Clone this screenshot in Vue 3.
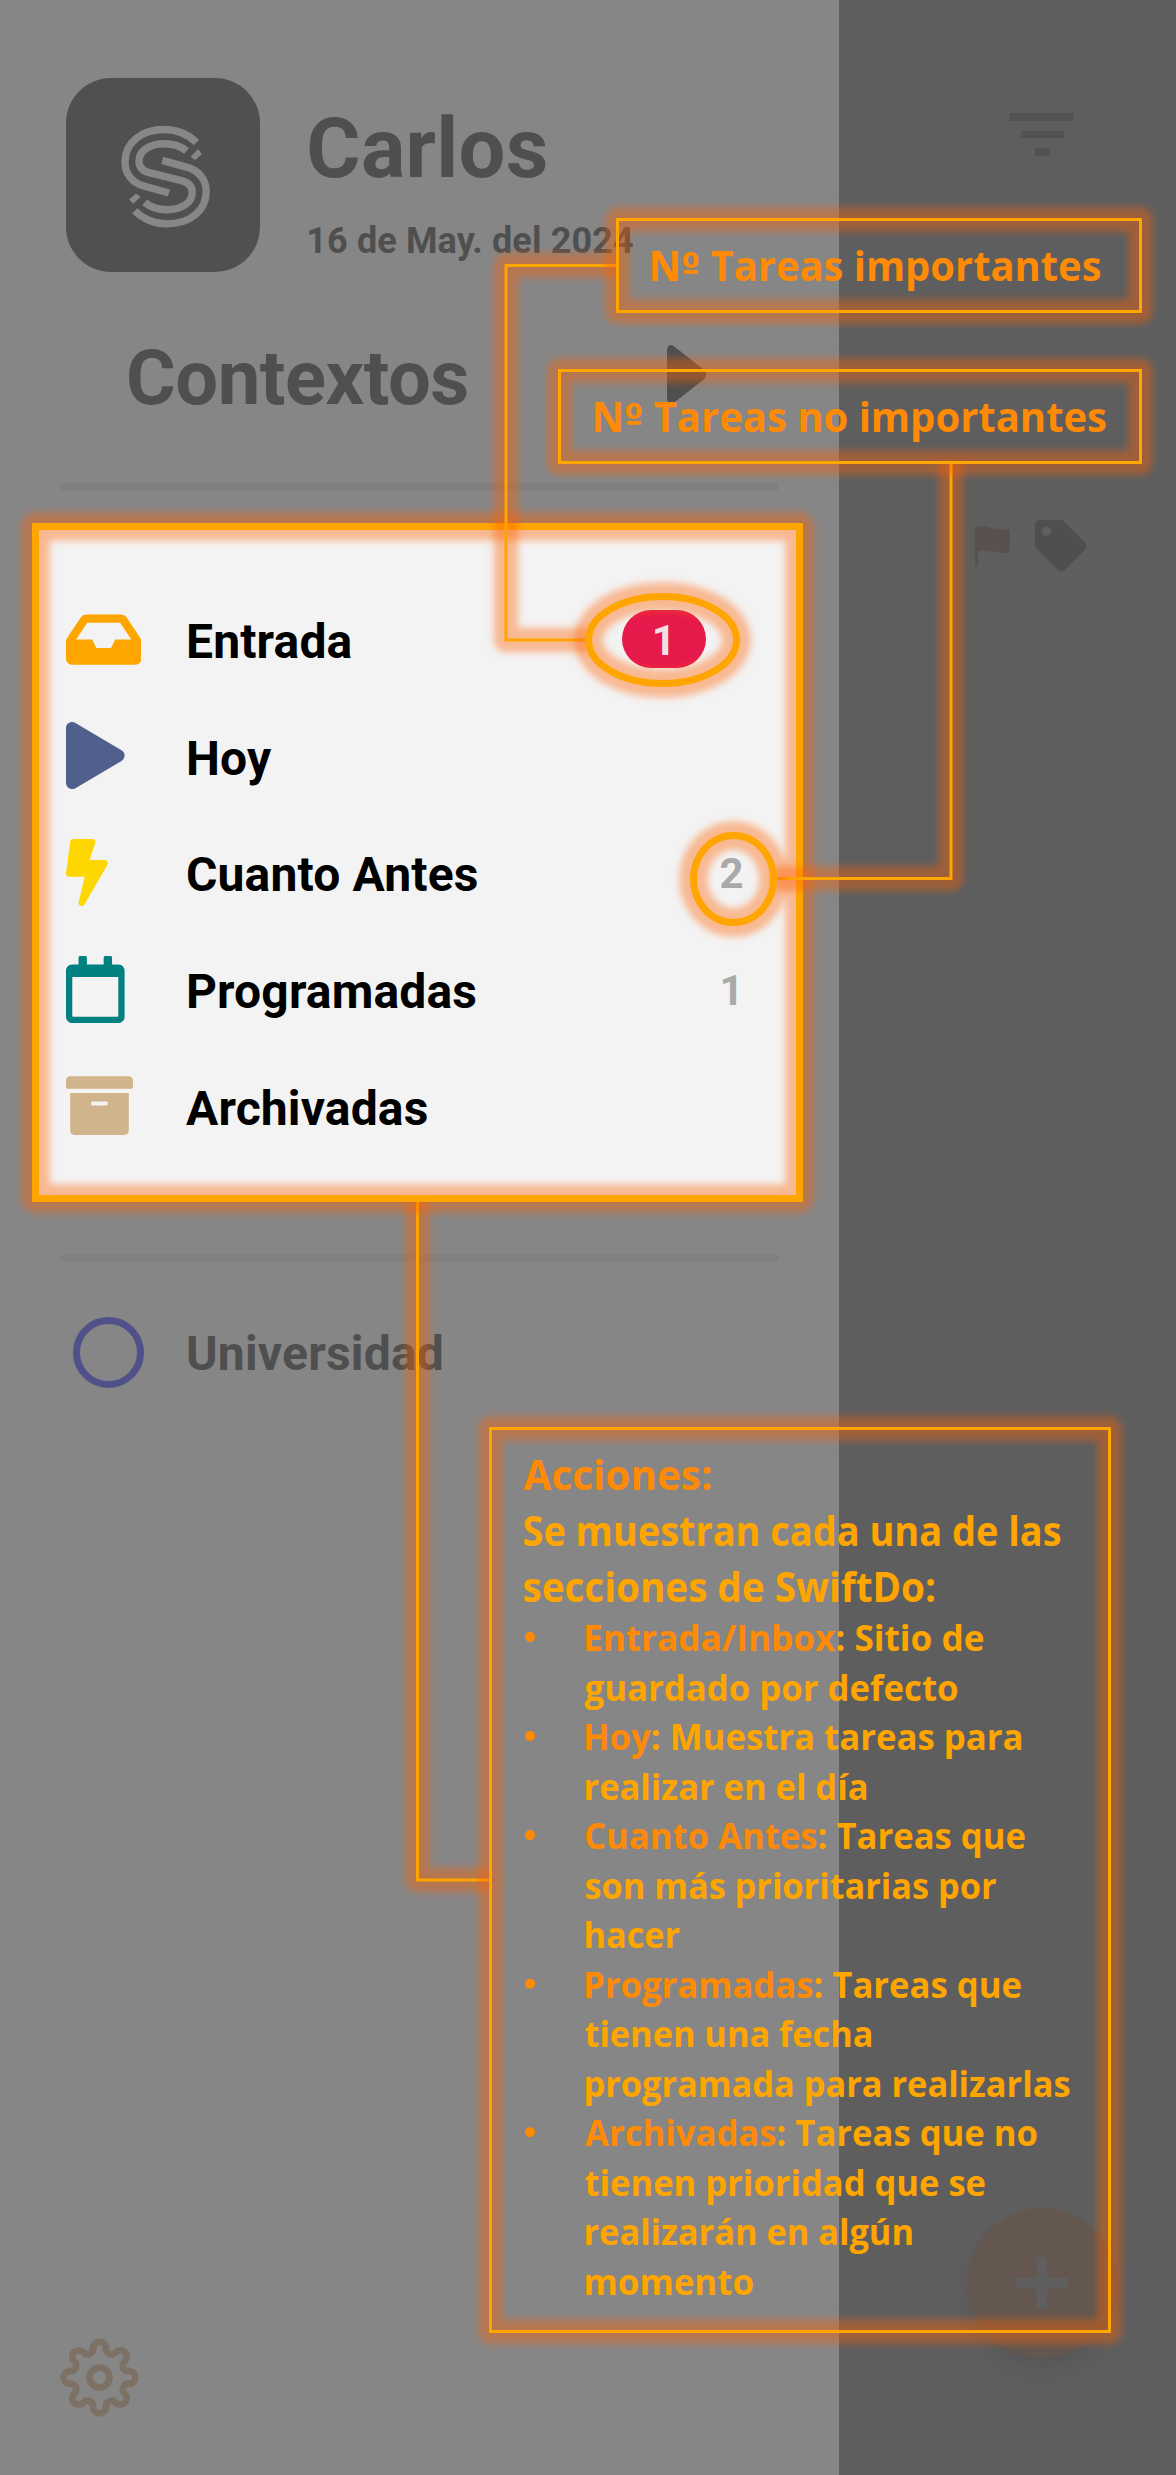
<script setup>
const sections = [
  {
    name: 'Entrada', color: '#ffa500', w: 75.4, box: '0 0 576 512', count: '1', important: true,
    path: 'M567.938 243.908L462.25 85.374A48.003 48.003 0 0 0 422.311 64H153.689a48 48 0 0 0-39.938 21.374L8.062 243.908A47.994 47.994 0 0 0 0 270.533V400c0 26.51 21.49 48 48 48h480c26.51 0 48-21.49 48-48V270.533a47.994 47.994 0 0 0-8.062-26.625zM162.252 128h251.497l85.333 128H376l-32 64H232l-32-64H76.918l85.334-128z',
  },
  {
    name: 'Hoy', color: '#505f8c', w: 58.6, box: '0 0 448 512',
    path: 'M424.4 214.7L72.4 6.6C43.8-10.3 0 6.1 0 47.9V464c0 37.5 40.7 60.1 72.4 41.3l352-208c31.4-18.5 31.5-64.1 0-82.6z',
  },
  {
    name: 'Cuanto Antes', color: '#ffd700', w: 41.9, box: '0 0 320 512', count: '2',
    path: 'M296 160H180.6l42.6-129.8C227.2 15 215.7 0 200 0H56C44 0 33.8 8.9 32.2 20.8l-32 240C-1.7 275.2 9.5 288 24 288h118.7L96.6 482.5c-3.6 15.2 8 29.5 23.3 29.5 8.4 0 16.4-4.4 20.8-12l176-304c9.3-15.9-2.2-36-20.7-36z',
  },
  {
    name: 'Programadas', color: '#008080', w: 58.6, box: '0 0 448 512', count: '1',
    path: 'M400 64h-48V12c0-6.6-5.4-12-12-12h-40c-6.6 0-12 5.4-12 12v52H160V12c0-6.6-5.4-12-12-12h-40c-6.6 0-12 5.4-12 12v52H48C21.5 64 0 85.5 0 112v352c0 26.5 21.5 48 48 48h352c26.5 0 48-21.5 48-48V112c0-26.5-21.5-48-48-48zm-6 400H54c-3.3 0-6-2.7-6-6V160h352v298c0 3.3-2.7 6-6 6z',
  },
  {
    name: 'Archivadas', color: '#d2b48c', w: 67, box: '0 0 512 512',
    path: 'M32 448c0 17.7 14.3 32 32 32h384c17.7 0 32-14.3 32-32V160H32v288zm160-212c0-6.6 5.4-12 12-12h104c6.6 0 12 5.4 12 12v8c0 6.6-5.4 12-12 12H204c-6.6 0-12-5.4-12-12v-8zM480 32H32C14.3 32 0 46.3 0 64v48c0 8.8 7.2 16 16 16h480c8.8 0 16-7.2 16-16V64c0-17.7-14.3-32-32-32z',
  },
]

// Eight-lobed gear outline: lobe circles alternate with valley circles tangent to them.
function gearPath() {
  const lobe = { r: 6.3, d: 29.5 }
  const valley = { r: 5.5, d: 31 }
  const at = (d, deg) => {
    const a = ((deg - 90) * Math.PI) / 180
    return [39 + d * Math.cos(a), 39 + d * Math.sin(a)]
  }
  const tangent = (l, v) => {
    const t = lobe.r / (lobe.r + valley.r)
    return [l[0] + (v[0] - l[0]) * t, l[1] + (v[1] - l[1]) * t].map((n) => n.toFixed(2)).join(' ')
  }
  let d = ''
  for (let k = 0; k < 8; k++) {
    const l = at(lobe.d, k * 45)
    const before = tangent(l, at(valley.d, k * 45 - 22.5))
    const after = tangent(l, at(valley.d, k * 45 + 22.5))
    d += k === 0 ? `M${before}` : `A${valley.r} ${valley.r} 0 0 0 ${before}`
    d += `A${lobe.r} ${lobe.r} 0 0 1 ${after}`
  }
  return d + `A${valley.r} ${valley.r} 0 0 0 ${tangent(at(lobe.d, 0), at(valley.d, -22.5))}Z`
}
const gear = gearPath()

// Callout labels: [text after "Nº", left, right, baseline]
const labels = [
  [' Tareas importantes', 648.5, 1101.5, 281],
  [' Tareas no importantes', 591.5, 1107, 432],
]
// Callout lines: [key text, remaining text, left, right, baseline]
const headings = [
  ['Acciones:', '', 523.5, 712.5, 1490],
  ['', 'Se muestran cada una de las', 522.5, 1061.5, 1546],
  ['', 'secciones de SwiftDo:', 522.5, 936, 1601.5],
]
const items = [
  ['Entrada/Inbox', ': Sitio de', 583, 984.5, true],
  ['', 'guardado por defecto', 584.5, 958.5],
  ['Hoy', ': Muestra tareas para', 583, 1023.5, true],
  ['', 'realizar en el día', 583.5, 868.5],
  ['Cuanto Antes', ': Tareas que', 584, 1026, true],
  ['', 'son más prioritarias por', 584.5, 996.5],
  ['', 'hacer', 583.5, 680],
  ['Programadas', ': Tareas que', 583, 1022, true],
  ['', 'tienen una fecha', 584.5, 873.5],
  ['', 'programada para realizarlas', 583.5, 1070.5],
  ['Archivadas', ': Tareas que no', 585, 1038, true],
  ['', 'tienen prioridad que se', 584.5, 986],
  ['', 'realizarán en algún', 583.5, 914],
  ['', 'momento', 583.5, 754],
].map((l, i) => [...l.slice(0, 4), 1651 + i * 49.53, l[4]])
</script>

<template>
  <div class="screen">
    <aside class="drawer">
      <header class="profile">
        <div class="logo">
          <svg viewBox="0 0 194 194" width="194" height="194">
            <g v-for="a in [0, 180]" :key="a" :transform="`rotate(${a} 99.6 98.7)`">
              <path class="band" d="M130.5 64.5C121 55.5 110 51.5 98.5 51.5C75 51.5 59 65 59 84C59 95.5 66 104.5 77 107.8L103 115" />
              <path class="band" d="M120.5 73C114 67.5 106 65.7 98.5 65.7C83 65.7 73 73 73 83C73 89.5 77 93 83 94.6L99.6 98.7" />
              <path class="chip" d="M124.6 78.7L132 71.3L136 76L129.3 82Z" />
            </g>
          </svg>
        </div>
        <div class="who">
          <h1>Carlos</h1>
          <p>16 de May. del 2024</p>
        </div>
      </header>

      <div class="contexts">
        <h2>Contextos</h2>
        <svg viewBox="0 0 448 512" width="39" height="59" preserveAspectRatio="none"><path fill="#4f4f4f" :d="sections[1].path" /></svg>
      </div>
      <div class="rule"></div>

      <nav class="sections">
        <div v-for="s in sections" :key="s.name" class="row">
          <svg :viewBox="s.box" :width="s.w" height="67.2"><path :fill="s.color" :d="s.path" /></svg>
          <span class="name">{{ s.name }}</span>
          <span v-if="s.count" class="count" :class="{ badge: s.important }">{{ s.count }}</span>
        </div>
      </nav>

      <div class="rule second"></div>
      <div class="context">
        <span class="ring"></span>
        <span class="title">Universidad</span>
      </div>

      <svg class="settings" viewBox="0 0 78 78" width="79" height="79">
        <g fill="none" stroke="#7c7164" stroke-width="6.6">
          <path :d="gear" />
          <circle cx="39" cy="39" r="9.8" />
        </g>
      </svg>
    </aside>

    <main class="tasks">
      <div class="filter"><i></i><i></i><i></i></div>
      <div class="marks">
        <svg viewBox="0 0 35 40" width="35" height="40">
          <path fill="#5b5050" d="M0 2.4Q0 1 1.6 .8C13-2 20 6 32.5 3Q35 2.4 35 4.8V24Q35 25.6 33.4 26.2C22 29.5 14 22 3 25V39Q3 40 2 40H1Q0 40 0 39Z" />
        </svg>
        <svg viewBox="0 0 512 512" width="51.5" height="51.5">
          <path fill="#4f4f4f" d="M0 252.118V48C0 21.49 21.49 0 48 0h204.118a48 48 0 0 1 33.941 14.059l211.882 211.882c18.745 18.745 18.745 49.137 0 67.882L293.823 497.941c-18.745 18.745-49.137 18.745-67.882 0L14.059 286.059A48 48 0 0 1 0 252.118zM112 64c-26.51 0-48 21.49-48 48s21.49 48 48 48 48-21.49 48-48-21.49-48-48-48z" />
        </svg>
      </div>
    </main>

    <div class="fab">
      <svg viewBox="0 0 52 52" width="52" height="52">
        <path d="M20.500 2.500Q20.500 0 23 0H29Q31.500 0 31.500 2.500V20.500H49.500Q52 20.500 52 23V29Q52 31.500 49.500 31.500H31.500V49.500Q31.500 52 29 52H23Q20.500 52 20.500 49.500V31.500H2.500Q0 31.500 0 29V23Q0 20.500 2.500 20.500H20.500Z" fill="#5f5f5f" />
      </svg>
    </div>

    <svg class="annotations" viewBox="0 0 1176 2475" width="1176" height="2475">
      <defs>
        <filter id="soft" filterUnits="userSpaceOnUse" x="0" y="0" width="1176" height="2475">
          <feGaussianBlur stdDeviation="3.9" />
        </filter>
      </defs>

      <path class="glow" d="M417.500 1198.500V1880H490.500" />
      <path class="line" d="M417.500 1198.500V1880H490.500" />

      <rect class="glow wide" x="35.500" y="526.500" width="764" height="672" />
      <rect class="line thick" x="35.500" y="526.500" width="764" height="672" />

      <path class="glow" d="M617.500 265.500H506V640H588" />
      <path class="line" d="M617.500 265.500H506V640H588" />
      <path class="glow" d="M951 462.500V878.500H773.500" />
      <path class="line" d="M951 462.500V878.500H773.500" />

      <ellipse class="glow wide" cx="662.500" cy="640" rx="74" ry="43.500" />
      <ellipse class="line thick" cx="662.500" cy="640" rx="74" ry="43.500" />
      <ellipse class="glow wide" cx="733.500" cy="879" rx="40" ry="43.500" />
      <ellipse class="line thick" cx="733.500" cy="879" rx="40" ry="43.500" />

      <rect class="glow" x="617.500" y="219.500" width="523" height="92" />
      <rect class="line" x="617.500" y="219.500" width="523" height="92" />
      <rect class="glow" x="559.500" y="370.500" width="581" height="92" />
      <rect class="line" x="559.500" y="370.500" width="581" height="92" />
      <rect class="glow" x="490.500" y="1428.500" width="619" height="903" />
      <rect class="line" x="490.500" y="1428.500" width="619" height="903" />

      <g class="heading">
        <text v-for="l in labels" :key="l[3]" class="key" :x="l[1]" :y="l[3]" :textLength="l[2] - l[1]" lengthAdjust="spacingAndGlyphs">N<tspan class="ordinal">º</tspan>{{ l[0] }}</text>
        <text v-for="l in headings" :key="l[4]" :x="l[2]" :y="l[4]" :textLength="l[3] - l[2]" lengthAdjust="spacingAndGlyphs"><tspan class="key">{{ l[0] }}</tspan>{{ l[1] }}</text>
      </g>
      <g class="item">
        <template v-for="l in items" :key="l[4]">
          <circle v-if="l[5]" class="key" cx="530" :cy="l[4] - 14" r="5" />
          <text :x="l[2]" :y="l[4]" :textLength="l[3] - l[2]" lengthAdjust="spacingAndGlyphs"><tspan class="key">{{ l[0] }}</tspan>{{ l[1] }}</text>
        </template>
      </g>
    </svg>
  </div>
</template>

<style>
body { margin: 0; }
</style>

<style scoped>
.screen {
  position: relative;
  display: flex;
  width: 1176px;
  height: 2475px;
  overflow: hidden;
  background: #5e5e5e;
  font-family: Roboto, sans-serif;
  font-weight: 700;
  color: #4f4f4f;
}
svg { display: block; flex: none; }
h1, h2, p { margin: 0; font-weight: 700; }
.drawer {
  display: flex;
  flex-direction: column;
  flex: none;
  box-sizing: border-box;
  width: 838.5px;
  padding-top: 78px;
  background: #868686;
}
.profile { display: flex; height: 194px; padding-left: 66px; }
.logo { width: 194px; height: 194px; border-radius: 45px; background: #4f5150; }
.band { fill: none; stroke: #878787; stroke-width: 7.4; }
.chip { fill: #878787; }
.who { padding: 28.500px 0 0 46.300px; white-space: nowrap; }
.who h1 { font-size: 83px; line-height: 84px; letter-spacing: 0.3px; }
.who p { margin-top: 30.500px; font-size: 36px; line-height: 40px; letter-spacing: 0.12px; }
.contexts { display: flex; height: 76px; margin-top: 68px; padding-left: 126px; }
.contexts h2 { width: 541px; font-size: 76px; line-height: 76px; letter-spacing: -0.5px; }
.contexts svg { margin-top: 5px; }
.rule { flex: none; width: 719px; height: 8px; margin: 67px 0 0 60px; border-radius: 4px; background: #808080; }
.sections {
  flex: none;
  box-sizing: border-box;
  width: 771px;
  height: 679px;
  margin: 32px 0 0 32px;
  padding: 82.500px 0 0 34px;
  background: #f3f3f3;
}
.row { position: relative; display: flex; height: 116.700px; color: #000; }
.name { width: 617px; margin-left: auto; padding-top: 1.500px; font-size: 48px; line-height: 70px; letter-spacing: 0.15px; }
.count {
  position: absolute;
  left: 638.500px;
  top: 6.500px;
  width: 54px;
  text-align: center;
  font-size: 42px;
  line-height: 58px;
  color: #a9a9a9;
}
.badge {
  box-sizing: border-box;
  left: 555.500px;
  top: 4.500px;
  width: 84.500px;
  height: 58px;
  padding-top: 2px;
  border-radius: 29px;
  background: #e6194b;
  color: #f0dfe4;
}
.rule.second { margin-top: 52px; }
.context { display: flex; align-items: center; height: 72px; margin: 54px 0 0 73px; font-size: 48px; line-height: 70px; }
.title { padding-top: 4px; letter-spacing: 0.2px; }
.ring { box-sizing: border-box; width: 71px; height: 71px; margin-right: 42px; border: 7px solid #50508a; border-radius: 50%; }
.settings { margin: auto 0 58.500px 59.500px; }
.tasks { flex: 1; padding-top: 113px; }
.filter { display: flex; flex-direction: column; align-items: center; gap: 10px; width: 64px; margin-left: 171.500px; }
.filter i { width: 64px; height: 7.700px; background: #525252; }
.filter i:nth-child(2) { width: 43px; }
.filter i:nth-child(3) { width: 15px; }
.marks { display: flex; align-items: center; gap: 25.500px; margin: 364px 0 0 136.200px; }
.fab {
  position: absolute;
  left: 966.500px;
  top: 2207.500px;
  display: flex;
  align-items: center;
  justify-content: center;
  width: 150px;
  height: 150px;
  border-radius: 50%;
  background: #63574f;
  box-shadow: 0 14px 18px -6px rgba(60, 60, 60, 0.22);
}
.annotations { position: absolute; inset: 0; }
.line { fill: none; stroke: #ffa500; stroke-width: 3; }
.thick { stroke-width: 7; }
.glow { fill: none; stroke: #ff5f0f; stroke-opacity: 0.4; stroke-width: 24.500; stroke-linejoin: round; filter: url(#soft); }
.glow.wide { stroke-width: 28.500; }
text { font-family: "Open Sans", sans-serif; font-weight: 700; fill: #ffa500; }
.heading { font-size: 41px; }
.ordinal { font-family: "DejaVu Sans Condensed", "DejaVu Sans", sans-serif; font-size: 39px; }
.item { font-size: 35.700px; }
.key { fill: #ff8a05; }
</style>
